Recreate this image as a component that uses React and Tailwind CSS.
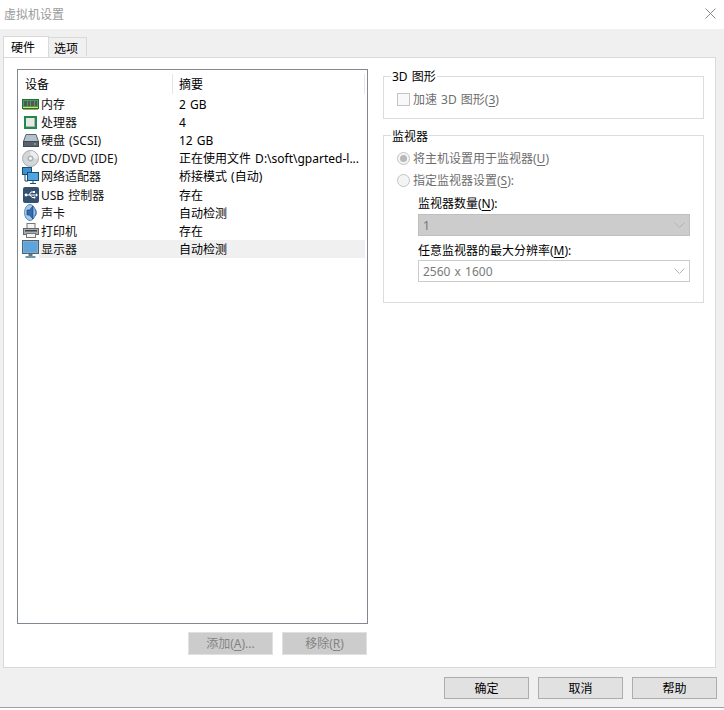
const font = { fontFamily: '"Noto Sans", "Noto Sans CJK SC", sans-serif' };

const Mem = () => (
  <svg width="17" height="11" viewBox="0 0 17 11">
    <rect x="0.5" y="0.5" width="16" height="9" fill="#46a05c" stroke="#1f7038" />
    <rect x="2" y="2" width="3" height="5" fill="#555" />
    <rect x="6" y="2" width="2" height="5" fill="#555" />
    <rect x="9" y="2" width="3" height="5" fill="#555" />
    <rect x="13" y="2" width="2" height="5" fill="#555" />
    <path d="M1 8.5h15" stroke="#cfe08a" />
    <path d="M1 10.5h15" stroke="#b8a040" />
  </svg>
);
const Cpu = () => (
  <svg width="13" height="13" viewBox="0 0 13 13">
    <rect x="0" y="0" width="13" height="13" fill="#1f8a4a" />
    <rect x="2" y="2" width="9" height="9" fill="#e6e8e6" />
    <path d="M2 10.5h9M10.5 2v9" stroke="#b0b4b0" />
  </svg>
);
const Hdd = () => (
  <svg width="16" height="13" viewBox="0 0 16 13">
    <path d="M3 0.5h10l2.5 7H.5z" fill="#b4c0cc" stroke="#5a6670" />
    <rect x="0.5" y="7.5" width="15" height="5" fill="#56636e" stroke="#3f4a54" />
    <rect x="11" y="9.5" width="2" height="1" fill="#8fe08f" />
  </svg>
);
const Cd = () => (
  <svg width="17" height="17" viewBox="0 0 17 17">
    <circle cx="8.5" cy="8.5" r="8" fill="#d4d7da" stroke="#a8acb0" />
    <path d="M8.5 1a7.5 7.5 0 0 1 7.5 7.5h-5a2.5 2.5 0 0 0-2.5-2.5z" fill="#eceef0" />
    <circle cx="8.5" cy="8.5" r="3" fill="#aeb2b6" />
    <circle cx="8.5" cy="8.5" r="1.4" fill="#fff" />
  </svg>
);
const Net = () => (
  <svg width="17" height="18" viewBox="0 0 17 18">
    <rect x="0.5" y="0.5" width="9" height="7" fill="#3f8fd0" stroke="#15506f" />
    <path d="M3 8v6h3" stroke="#15506f" fill="none" />
    <rect x="5.5" y="5.5" width="11" height="8" fill="#4fa4e4" stroke="#15506f" />
    <path d="M8 16.5h6M11 14v2" stroke="#15506f" />
  </svg>
);
const Usb = () => (
  <svg width="16" height="16" viewBox="0 0 16 16">
    <rect width="16" height="16" rx="2" fill="#33526f" />
    <path d="M2.5 8h11M6 8l2-3h2M7 8l2 2.5h2" stroke="#fff" fill="none" />
    <circle cx="3" cy="8" r="1.4" fill="#fff" />
    <path d="M13 6.2L15 8l-2 1.8z" fill="#fff" />
    <rect x="10" y="4" width="2" height="2" fill="#fff" />
    <circle cx="11.5" cy="10.5" r="1" fill="#fff" />
  </svg>
);
const Sound = () => (
  <svg width="14" height="17" viewBox="0 0 14 17">
    <ellipse cx="6" cy="8.5" rx="5.5" ry="8" fill="#a8c8e8" stroke="#5a8cc0" />
    <path d="M3 6h2.5L9 2v13l-3.5-4H3z" fill="#2f6cb0" stroke="#16467c" strokeWidth="0.7" />
    <path d="M11 5Q13.5 8.5 11 12" stroke="#3a78b8" fill="none" strokeWidth="1.2" />
  </svg>
);
const Printer = () => (
  <svg width="16" height="15" viewBox="0 0 16 15">
    <rect x="4" y="0.5" width="8" height="5" fill="#f4f4f4" stroke="#777" />
    <rect x="0.5" y="5.5" width="15" height="6" fill="#a8aeb4" stroke="#5f666c" />
    <rect x="2" y="7" width="12" height="1.5" fill="#3f444a" />
    <rect x="3.5" y="10.5" width="9" height="4" fill="#f4f4f4" stroke="#777" />
  </svg>
);
const Monitor = () => (
  <svg width="17" height="18" viewBox="0 0 17 18">
    <rect x="0.5" y="0.5" width="16" height="13" fill="#8fa8bc" stroke="#3f6682" />
    <rect x="2" y="2" width="13" height="10" fill="#5fa4da" />
    <path d="M6.5 14h4v2h-4z" fill="#5a7a8c" />
    <path d="M3.5 17h10" stroke="#2f6a82" strokeWidth="1.4" />
  </svg>
);

const rows = [
  [Mem, '内存', '2 GB'],
  [Cpu, '处理器', '4'],
  [Hdd, '硬盘 (SCSI)', '12 GB'],
  [Cd, 'CD/DVD (IDE)', '正在使用文件 D:\\soft\\gparted-l...'],
  [Net, '网络适配器', '桥接模式 (自动)'],
  [Usb, 'USB 控制器', '存在'],
  [Sound, '声卡', '自动检测'],
  [Printer, '打印机', '存在'],
  [Monitor, '显示器', '自动检测'],
];

const Chevron = () => (
  <svg width="11" height="6" viewBox="0 0 11 6" className="mr-[3px]">
    <path d="M0.5 0.5L5.5 5.5L10.5 0.5" stroke="#b4b4b4" fill="none" />
  </svg>
);

const U = ({ children }) => <span className="underline underline-offset-2">{children}</span>;

const Radio = ({ checked }) => (
  <span className="w-[13px] h-[13px] rounded-full border border-[#c4c4c4] bg-[#f4f4f4] flex items-center justify-center shrink-0">
    {checked && <span className="w-[7px] h-[7px] rounded-full bg-[#b8b8b8]" />}
  </span>
);

const DisabledBtn = ({ children }) => (
  <div className="w-[85px] h-[23px] pt-[1px] bg-[#cccccc] border border-[#e0e0e0] flex items-center justify-center text-[#838383]">{children}</div>
);
const Btn = ({ children }) => (
  <div className="w-[85px] h-[22px] pt-[2px] bg-[#e1e1e1] border border-[#adadad] flex items-center justify-center text-black">{children}</div>
);

export default function App() {
  return (
    <div style={font} className="w-[724px] h-[708px] bg-white text-[12px] leading-[18px] text-black [word-spacing:1px] flex flex-col border-b border-[#a0a0a0] overflow-hidden">
      <div className="h-[29px] shrink-0 flex items-center justify-between pl-[4px] pr-[8px] bg-white">
        <span className="text-[#9a9a9a]">虚拟机设置</span>
        <svg width="11" height="11" viewBox="0 0 11 11" className="mb-[2px]">
          <path d="M0.5 0.5L10.5 10.5M10.5 0.5L0.5 10.5" stroke="#8a8a8a" />
        </svg>
      </div>
      <div className="flex-1 bg-[#f0f0f0] px-[3px] pt-[8px] flex flex-col">
        <div className="flex items-end h-[20px] shrink-0 relative z-10">
          <div className="w-[46px] h-[21px] pt-[2px] bg-white border border-b-0 border-[#d9d9d9] flex items-center pl-[7px]">硬件</div>
          <div className="w-[39px] h-[19px] -ml-px mb-[1px] bg-[#f0f0f0] border border-[#d9d9d9] border-b-0 flex items-center pl-[5px] pt-[4px]">选项</div>
        </div>
        <div className="h-[611px] w-[713px] shrink-0 bg-white border border-[#d9d9d9] pl-[13px] pr-[11px] pt-[11px] flex gap-[15px]">
          <div className="w-[351px] flex flex-col shrink-0">
            <div className="h-[555px] border border-[#828790] shrink-0 flex flex-col">
              <div className="h-[25px] flex shrink-0 pt-[4px]">
                <div className="w-[155px] pl-[7px] pt-[2px] border-r border-[#e5e5e5] h-[20px] flex items-center">设备</div>
                <div className="pl-[6px] pt-[2px] flex-1 border-r border-[#e5e5e5] h-[20px] flex items-center mr-[2px]">摘要</div>
              </div>
              {rows.map(([Icon, name, val], i) => (
                <div key={name} className="flex h-[18.1px] items-center">
                  <div className="w-[21px] pl-[4px] flex justify-center items-center shrink-0 h-full overflow-visible">
                    <Icon />
                  </div>
                  <div className={`flex flex-1 h-full items-center pt-[2px] mr-[2px] ${i === 8 ? 'bg-[#f0f0f0]' : ''}`}>
                    <div className="w-[140px] pl-[2px] text-[#111] whitespace-nowrap">{name}</div>
                    <div className="whitespace-nowrap">{val}</div>
                  </div>
                </div>
              ))}
            </div>
            <div className="flex justify-end gap-[9px] mt-[8px] pr-px">
              <DisabledBtn>添加(<U>A</U>)...</DisabledBtn>
              <DisabledBtn>移除(<U>R</U>)</DisabledBtn>
            </div>
          </div>
          <div className="w-[321px] shrink-0 flex flex-col gap-[9px]">
            <fieldset className="border border-[#dcdcdc] h-[50px] pl-[13px]">
              <legend className="-ml-[6px] px-[1px] leading-[14px]"><span className="block translate-y-[1px]">3D 图形</span></legend>
              <div className="flex items-center gap-[3px] text-[#6d6d6d] mt-[7px]">
                <span className="w-[13px] h-[13px] border border-[#c4c4c4] bg-[#f8f8f8]" />
                <span className="pt-[1px]">加速 3D 图形(<U>3</U>)</span>
              </div>
            </fieldset>
            <fieldset className="border border-[#dcdcdc] h-[175px] pl-[13px] pr-[13px]">
              <legend className="-ml-[6px] px-[1px] leading-[14px]"><span className="block translate-y-[2px]">监视器</span></legend>
              <div className="flex items-center gap-[3px] text-[#6d6d6d] mt-[7px] h-[18px]">
                <Radio checked />
                <span className="pt-[2px]">将主机设置用于监视器(<U>U</U>)</span>
              </div>
              <div className="flex items-center gap-[3px] text-[#6d6d6d] mt-[4px] h-[18px]">
                <Radio />
                <span className="pt-[2px]">指定监视器设置(<U>S</U>):</span>
              </div>
              <div className="ml-[21px] mt-[5px] flex flex-col">
                <div className="h-[18px] pt-[2px] flex items-center">
                  <span>监视器数量(<U>N</U>):</span>
                </div>
                <div className="mt-[2px] h-[22px] bg-[#cccccc] border border-[#bfbfbf] flex items-center justify-between pl-[4px] pr-px text-[#777]">
                  <span className="pt-[1px]">1</span>
                  <Chevron />
                </div>
                <div className="mt-[5px] h-[18px] pt-[2px] flex items-center">
                  <span>任意监视器的最大分辨率(<U>M</U>):</span>
                </div>
                <div className="mt-[1px] h-[22px] bg-white border border-[#cccccc] flex items-center justify-between pl-[4px] pr-px text-[#7a7a7a]">
                  <span className="pt-[2px]">2560 x 1600</span>
                  <Chevron />
                </div>
              </div>
            </fieldset>
          </div>
        </div>
        <div className="flex justify-end gap-[9px] mt-[9px] pr-[4px]">
          <Btn>确定</Btn>
          <Btn>取消</Btn>
          <Btn>帮助</Btn>
        </div>
      </div>
    </div>
  );
}
